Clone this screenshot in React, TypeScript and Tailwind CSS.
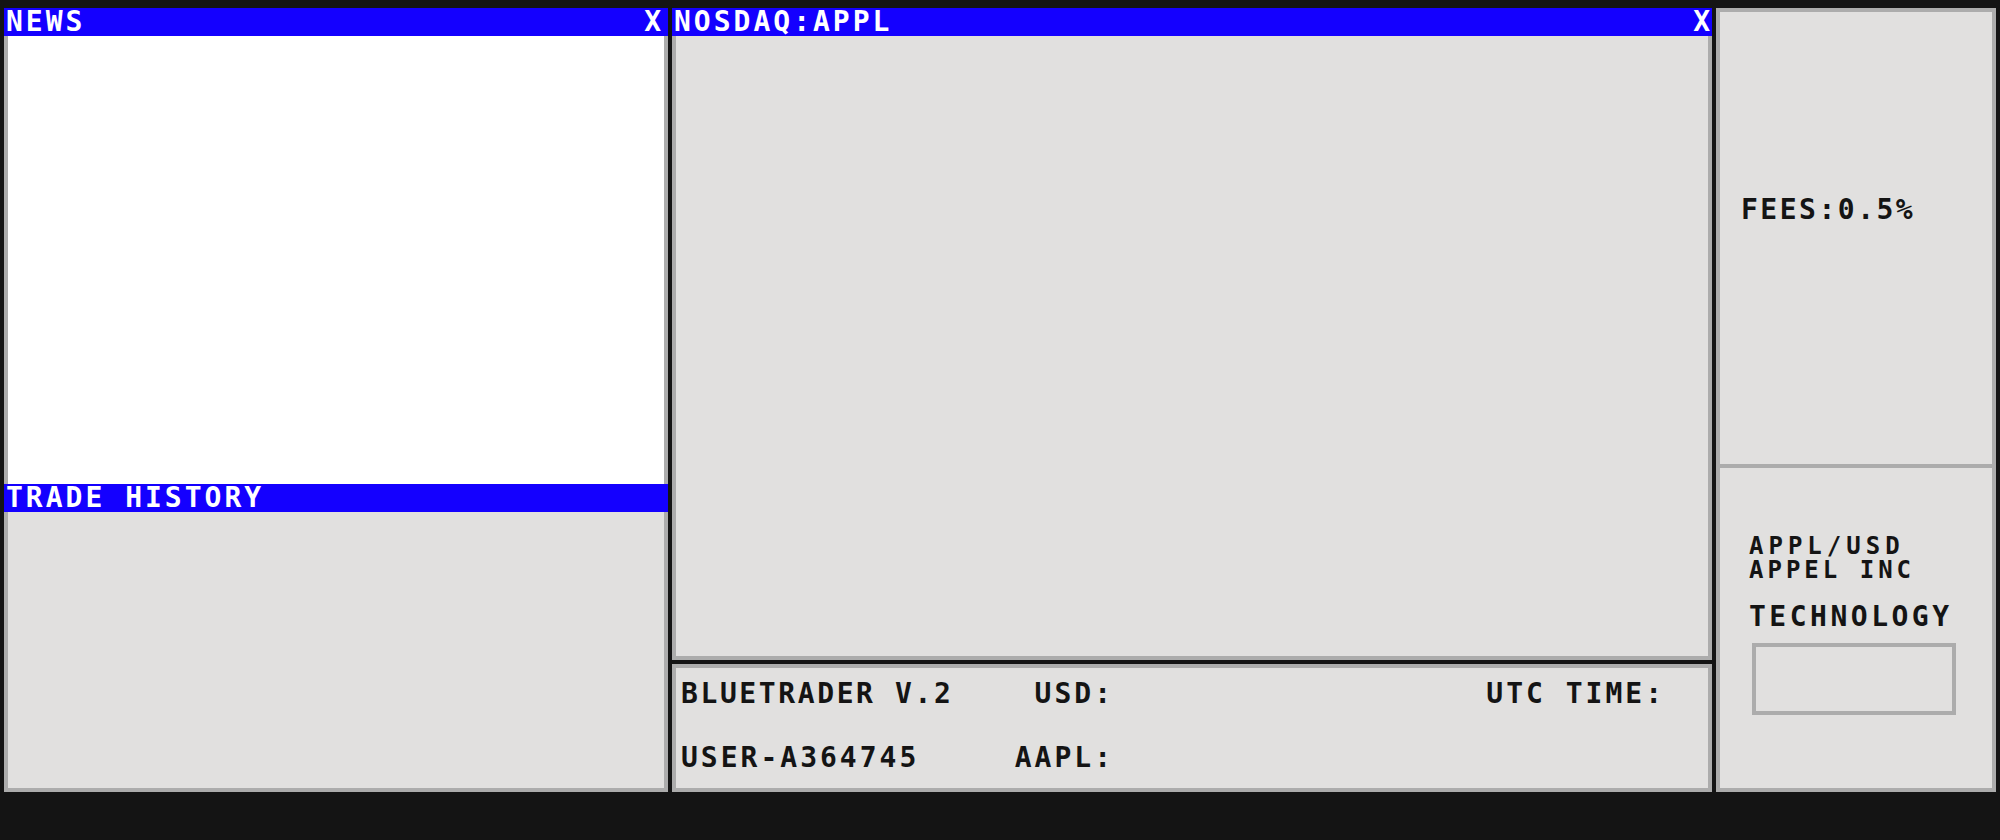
import React from "react";

const font = "font-['DejaVu_Sans_Mono',monospace] font-bold";

function Header({ title, close = true, pr = "pr-[4px]" }: { title: string; close?: boolean; pr?: string }) {
  return (
    <div className={`h-[28px] shrink-0 bg-[#1400ff] flex items-center justify-between pl-[2px] ${pr} text-white text-[28px] leading-[28px] tracking-[3px] whitespace-nowrap`}>
      <span>{title}</span>
      {close && <span className="tracking-normal">X</span>}
    </div>
  );
}

export default function App() {
  return (
    <div className={`w-[2000px] h-[840px] bg-[#141414] pt-[8px] px-[4px] pb-[48px] flex gap-[4px] text-[#141414] ${font}`}>
      {/* Left column */}
      <div className="w-[664px] h-[784px] flex flex-col">
        <Header title="NEWS" pr="pr-[7px]" />
        <div className="h-[448px] shrink-0 bg-white border-x-4 border-[#acacac]" />
        <Header title="TRADE HISTORY" close={false} />
        <div className="flex-1 bg-[#e1e0df] border-x-4 border-b-4 border-[#acacac]" />
      </div>

      {/* Center column */}
      <div className="w-[1040px] h-[784px] flex flex-col gap-[4px]">
        <div className="h-[652px] flex flex-col">
          <Header title="NOSDAQ:APPL" pr="pr-[2px]" />
          <div className="flex-1 bg-[#e1e0df] border-x-4 border-b-4 border-[#acacac]" />
        </div>
        <div className="h-[128px] bg-[#e1e0df] border-4 border-[#acacac] pt-[12px] pl-[5px] pr-[43px] flex flex-col gap-[36px] text-[28px] leading-[28px] tracking-[3px] whitespace-nowrap">
          <div className="flex items-start">
            <span className="w-[250px] shrink-0 tracking-[2.6px]">BLUETRADER V.2</span>
            <span className="w-[183px] shrink-0 text-right">USD:</span>
            <span className="ml-auto">UTC TIME:</span>
          </div>
          <div className="flex items-start">
            <span className="w-[250px] shrink-0">USER-A364745</span>
            <span className="w-[183px] shrink-0 text-right">AAPL:</span>
          </div>
        </div>
      </div>

      {/* Right column */}
      <div className="w-[280px] h-[784px] bg-[#e1e0df] border-4 border-[#acacac] flex flex-col whitespace-nowrap">
        <div className="h-[456px] shrink-0 border-b-4 border-[#acacac] pt-[184px] pl-[21px] text-[28px] leading-[28px] tracking-[2.5px]">
          FEES:0.5%
        </div>
        <div className="flex-1 pt-[66px] pl-[29px] flex flex-col">
          <div className="text-[24px] leading-[24px] tracking-[5px]">APPL/USD</div>
          <div className="text-[24px] leading-[24px] tracking-[4px]">APPEL INC</div>
          <div className="mt-[21px] text-[28px] leading-[28px] tracking-[3.5px]">TECHNOLOGY</div>
          <div className="mt-[12px] ml-[3px] w-[204px] h-[72px] border-4 border-[#acacac]" />
        </div>
      </div>
    </div>
  );
}
